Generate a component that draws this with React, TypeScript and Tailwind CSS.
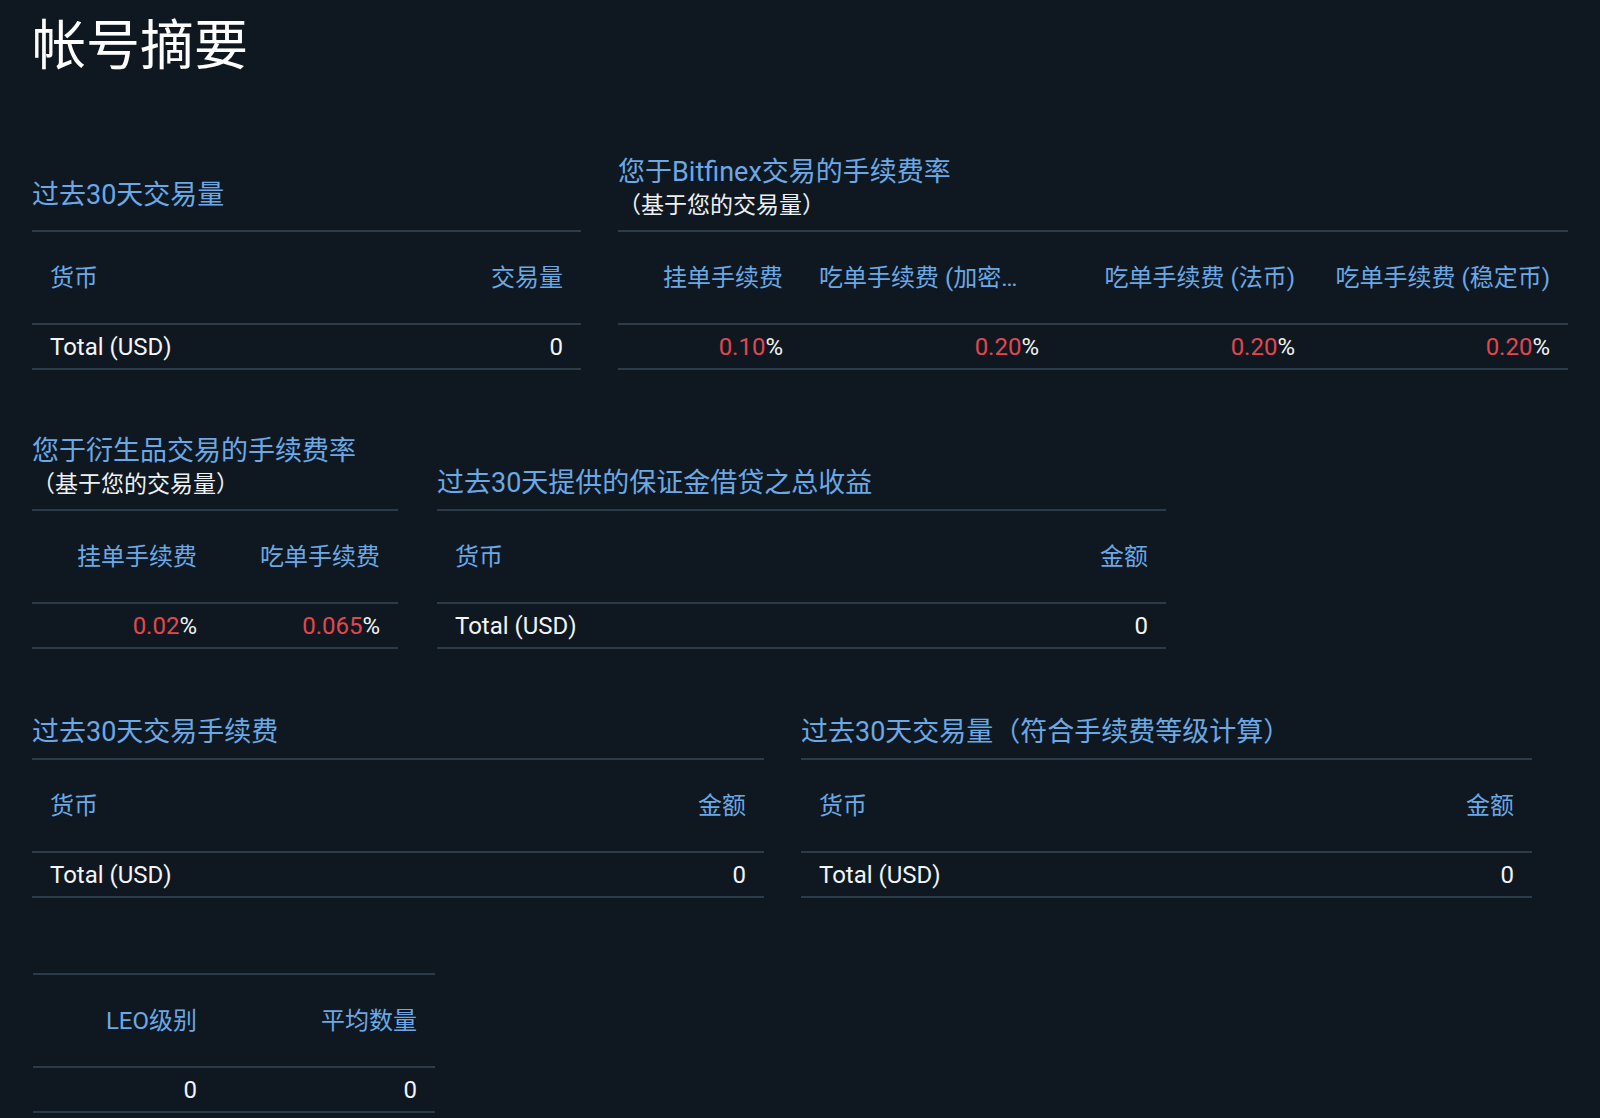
import type { ReactNode } from "react";

// account summary page, static numbers for now

type Head = { label: string; right?: boolean };

type CardProps = {
  title?: string;
  subtitle?: string;
  className: string;
  grid: string;
  heads: Head[];
  cells: ReactNode[];
  titleClass?: string;
};

const Pct = ({ v }: { v: string }) => (
  <>
    <span className="text-[#e4464f]">{v}</span>%
  </>
);

function Card({ title, subtitle, className, grid, heads, cells, titleClass = "pb-[8px]" }: CardProps) {
  return (
    <section className={`flex flex-col ${className}`}>
      {title && (
        <div className={`flex flex-col ${titleClass}`}>
          <h2 className="text-[27px] leading-[36px] whitespace-nowrap text-[#6ba8e6]">{title}</h2>
          {subtitle && (
            <p className="text-[23px] leading-[32px] whitespace-nowrap text-[#eef1f3]">{subtitle}</p>
          )}
        </div>
      )}
      <div className="border-y-2 border-[#2b3b49]">
        <div className={`grid h-[91px] items-center text-[24px] text-[#6ba8e6] ${grid}`}>
          {heads.map(h => (
            <div
              key={h.label}
              className={`truncate px-[18px] ${h.right ? "text-right" : "text-left"}`}
            >
              {h.label}
            </div>
          ))}
        </div>
        <div
          className={`grid h-[45px] items-center border-t-2 border-[#2b3b49] text-[24px] text-[#f2f4f5] ${grid}`}
        >
          {cells.map((c, i) => (
            <div
              key={i}
              className={`truncate px-[18px] ${heads[i].right ? "text-right" : "text-left"}`}
            >
              {c}
            </div>
          ))}
        </div>
      </div>
    </section>
  );
}

export default function App() {
  return (
    <div className="min-h-screen bg-[#0f1820] px-[32px] pt-[15px] pb-[6px] font-[Roboto,'Noto_Sans_CJK_SC',sans-serif]">
      <h1 className="text-[54px] leading-[64px] text-white">帐号摘要</h1>

      {/* row 1 */}
      <div className="mt-[75px] flex items-end gap-[37px]">
        <Card
          title="过去30天交易量"
          titleClass="pb-[17px]"
          className="w-[549px]"
          grid="grid-cols-2"
          heads={[{ label: "货币" }, { label: "交易量", right: true }]}
          cells={["Total (USD)", "0"]}
        />
        <Card
          title="您于Bitfinex交易的手续费率"
          subtitle="（基于您的交易量）"
          className="w-[950px]"
          grid="grid-cols-[183px_256px_256px_255px]"
          heads={[
            { label: "挂单手续费", right: true },
            { label: "吃单手续费 (加密货币)", right: true },
            { label: "吃单手续费 (法币)", right: true },
            { label: "吃单手续费 (稳定币)", right: true },
          ]}
          cells={[<Pct v="0.10" />, <Pct v="0.20" />, <Pct v="0.20" />, <Pct v="0.20" />]}
        />
      </div>

      {/* row 2 */}
      <div className="mt-[63px] flex items-end gap-[39px]">
        <Card
          title="您于衍生品交易的手续费率"
          subtitle="（基于您的交易量）"
          className="w-[366px]"
          grid="grid-cols-2"
          heads={[
            { label: "挂单手续费", right: true },
            { label: "吃单手续费", right: true },
          ]}
          cells={[<Pct v="0.02" />, <Pct v="0.065" />]}
        />
        <Card
          title="过去30天提供的保证金借贷之总收益"
          className="w-[729px]"
          grid="grid-cols-2"
          heads={[{ label: "货币" }, { label: "金额", right: true }]}
          cells={["Total (USD)", "0"]}
        />
      </div>

      {/* row 3 */}
      <div className="mt-[65px] flex items-end gap-[37px]">
        <Card
          title="过去30天交易手续费"
          className="w-[732px]"
          grid="grid-cols-2"
          heads={[{ label: "货币" }, { label: "金额", right: true }]}
          cells={["Total (USD)", "0"]}
        />
        <Card
          title="过去30天交易量（符合手续费等级计算）"
          className="w-[731px]"
          grid="grid-cols-2"
          heads={[{ label: "货币" }, { label: "金额", right: true }]}
          cells={["Total (USD)", "0"]}
        />
      </div>

      {/* LEO */}
      <div className="mt-[75px] flex">
        <Card
          className="ml-px w-[402px]"
          grid="grid-cols-[182px_220px]"
          heads={[
            { label: "LEO级别", right: true },
            { label: "平均数量", right: true },
          ]}
          cells={["0", "0"]}
        />
      </div>
    </div>
  );
}
